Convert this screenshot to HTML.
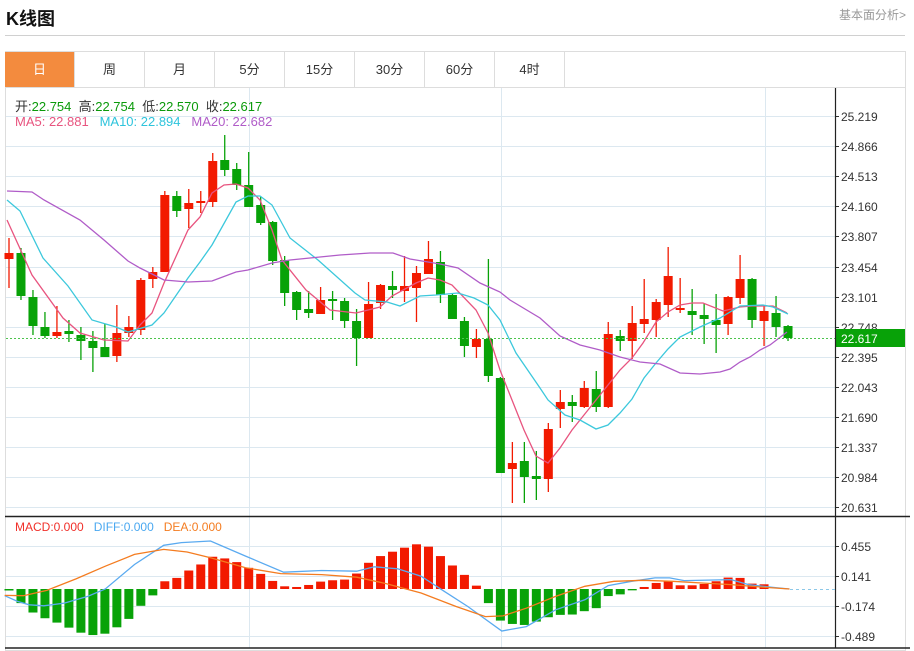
<!DOCTYPE html>
<html><head><meta charset="utf-8"><style>
body{margin:0;width:914px;height:651px;background:#fff;font-family:"Liberation Sans","Noto Sans CJK SC",sans-serif;position:relative;overflow:hidden}
.t{position:absolute;white-space:nowrap}
</style></head><body>
<div class="t" style="left:6px;top:5px;font-size:18px;font-weight:bold;color:#111">K线图</div>
<div class="t" style="right:8px;top:6px;font-size:12px;color:#999">基本面分析&gt;</div>
<div style="position:absolute;left:5px;top:35px;width:900px;height:1px;background:#d0d0d0"></div>
<div style="position:absolute;left:5px;top:51px;width:899px;height:598px;border:1px solid #ddd"></div>
<div style="position:absolute;left:6px;top:87px;width:899px;height:1px;background:#ddd"></div>
<div id="tabs"></div>
<svg id="c" width="914" height="651" style="position:absolute;left:0;top:0"></svg>
<div class="t" style="left:15px;top:96px;font-size:13px;color:#333">开:<span style="color:#0a9a0a">22.754</span>&nbsp; 高:<span style="color:#0a9a0a">22.754</span>&nbsp; 低:<span style="color:#0a9a0a">22.570</span>&nbsp; 收:<span style="color:#0a9a0a">22.617</span></div>
<div class="t" style="left:15px;top:114px;font-size:13px"><span style="color:#e8547f">MA5: 22.881</span>&nbsp;&nbsp; <span style="color:#2ec4dc">MA10: 22.894</span>&nbsp;&nbsp; <span style="color:#b05cc8">MA20: 22.682</span></div>
<div class="t" style="left:15px;top:520px;font-size:12px"><span style="color:#f0302a">MACD:0.000</span>&nbsp;&nbsp; <span style="color:#4aa8f0">DIFF:0.000</span>&nbsp;&nbsp; <span style="color:#f47c20">DEA:0.000</span></div>
<script>
var tabs=["日","周","月","5分","15分","30分","60分","4时"],h="";
tabs.forEach(function(t,i){h+='<div class="t" style="left:'+(5+70*i)+'px;top:52px;width:69px;height:35px;line-height:35px;text-align:center;font-size:13px;border-right:1px solid #ddd;'+(i==0?'background:#f38b3e;color:#fff;':'color:#333;')+'">'+t+'</div>';});
document.getElementById('tabs').innerHTML=h;
var s="";
function L(x1,y1,x2,y2,c,w,d){s+='<line x1="'+x1+'" y1="'+y1+'" x2="'+x2+'" y2="'+y2+'" stroke="'+c+'" stroke-width="'+(w||1)+'"'+(d?' stroke-dasharray="'+d+'"':'')+'/>';}
function T(x,y,t,c,fs){s+='<text x="'+x+'" y="'+y+'" fill="'+(c||'#333')+'" font-size="'+(fs||12)+'" font-family="Liberation Sans,sans-serif">'+t+'</text>';}
var vals=["25.219","24.866","24.513","24.160","23.807","23.454","23.101","22.748","22.395","22.043","21.690","21.337","20.984","20.631"];
vals.forEach(function(v,i){var y=116+30.1*i;y=Math.round(y)+.5;L(6,y,835,y,"#dce8f0");L(835,y,839,y,"#333");T(841,y+4.5,v);});
[249.5,501.5,765.5].forEach(function(x){L(x,88,x,648,"#dce8f0");});
[[546,"0.455"],[576,"0.141"],[606,"-0.174"],[636,"-0.489"]].forEach(function(a){var y=a[0]+.5;L(6,y,835,y,"#dce8f0");L(835,y,839,y,"#333");T(841,y+4.5,a[1]);});
var C=[[1,253,259,238,288],[0,253,296,248,300],[0,297,326,290,335],[0,327,336,312,338],[1,336,332,306,338],[0,331,334,320,342],[0,335,341,327,360],[0,341,348,331,372],[0,347,357,324,357],[1,356,333,305,362],[1,333,327,316,337],[1,330,280,278,335],[1,279,272,267,288],[1,272,195,191,272],[0,196,211,191,217],[1,209,203,189,228],[1,203,201,191,213],[1,202,161,153,207],[0,160,170,135,176],[0,169,185,163,190],[0,185,207,152,207],[0,205,223,197,225],[0,222,261,221,265],[0,260,293,256,306],[0,292,310,291,320],[0,309,313,291,318],[1,314,300,287,314],[0,299,301,291,320],[0,301,321,298,328],[0,321,338,309,366],[1,338,304,282,338],[1,303,285,284,309],[0,286,290,271,298],[1,291,286,256,302],[1,288,273,266,322],[1,274,259,241,274],[0,262,295,251,303],[0,295,319,294,319],[0,321,346,317,357],[1,347,339,329,358],[0,339,376,259,382],[0,378,473,377,473],[1,469,463,442,503],[0,461,477,442,503],[0,476,479,451,500],[1,479,429,423,492],[1,409,402,390,428],[0,402,406,395,422],[1,407,388,381,408],[0,389,407,371,412],[1,407,334,322,408],[0,336,341,330,351],[1,341,323,306,359],[1,324,319,279,333],[1,320,302,299,337],[1,305,276,247,317],[1,310,308,278,313],[0,311,315,289,335],[0,315,319,304,344],[0,320,325,294,353],[1,324,297,296,335],[1,298,279,255,304],[0,279,320,278,328],[1,321,311,305,346],[0,313,327,296,337],[0,326,338,325,341]];
C.forEach(function(c,i){var x=9+11.985*i,col=c[0]?"#f21a00":"#08a208",t=Math.min(c[1],c[2]),b=Math.max(c[1],c[2]);if(b-t<2)b=t+2;
L(x,c[3],x,c[4],col,1.3);s+='<rect x="'+(x-4.5)+'" y="'+t+'" width="9" height="'+(b-t)+'" fill="'+col+'"/>';});
function P(pts,c){s+='<polyline fill="none" stroke="'+c+'" stroke-width="1.3" points="'+pts+'"/>';}
P("7,220 32,275 63,318 80,333 104,340 128,341 140,325 152,313 164,283 188,230 200,217 212,193 224,185 236,184 248,188 260,200 272,230 282,260 306,290 330,310 356,313 380,307 392,296 416,283 428,278 440,280 452,285 476,310 488,333 500,370 524,430 536,456 548,463 560,448 572,430 584,415 596,400 608,385 620,370 632,358 643,343 656,322 668,312 680,305 692,303 703,303 723,311 740,307 752,306 773,306 787,313","#e8547f");
P("7,200 20,211 43,258 68,286 92,320 116,327 128,332 152,325 164,313 188,278 200,262 212,245 236,202 248,196 260,196 272,205 290,238 318,260 355,293 365,300 387,302 400,306 420,296 436,295 458,293 474,298 488,305 500,320 516,353 540,388 548,400 565,415 580,420 596,429 608,425 620,413 632,399 644,378 656,363 668,349 680,337 700,327 720,318 740,306 763,305 773,307 788,314","#3cc8dc");
P("7,191 32,192 44,200 80,220 104,240 128,261 140,268 164,280 188,282 212,281 236,272 248,270 272,263 290,260 320,257 340,255 370,253 393,253 410,259 440,264 458,268 480,283 500,292 510,300 540,318 560,336 580,345 600,350 620,357 640,362 660,364 680,373 700,374 720,372 730,369 740,362 750,357 760,350 770,345 787,332","#b05cc8");
L(6,338.5,835,338.5,"#4cc44c",1,"2,2");
s+='<rect x="835" y="329" width="70" height="18" fill="#08a208"/>';T(841,343,"22.617","#fff",12);
L(5,516.5,910,516.5,"#222",1.5);L(5,648,910,648,"#222",1.5);L(835.5,88,835.5,648,"#222",1.2);
var M=[272,310,338,355,368,383,398,405,401,382,357,318,287,245,235,213,195,172,177,188,205,223,244,260,262,256,246,242,240,222,190,170,157,145,135,142,170,198,226,258,310,362,372,375,365,352,345,344,334,325,289,284,272,262,250,245,257,257,253,245,234,235,252,254];
M.forEach(function(Y,i){var x=9+11.985*i,v=(Y-268)*0.336;if(i==0)v=1.5;var col=v>0?"#08a208":"#f21a00";
if(v>0)s+='<rect x="'+(x-4.5)+'" y="589" width="9" height="'+v+'" fill="'+col+'"/>';else s+='<rect x="'+(x-4.5)+'" y="'+(589+v)+'" width="9" height="'+(-v)+'" fill="'+col+'"/>';});
function Q(a,c){var p=a.map(function(q){return (q[0]/1.71).toFixed(1)+","+(546+(q[1]-140)*0.336).toFixed(1);}).join(" ");P(p,c);}
Q([[8,288],[30,305],[50,315],[75,318],[110,310],[150,290],[180,268],[230,195],[280,138],[310,130],[360,125],[420,170],[485,218],[550,213],[610,215],[640,202],[680,208],[720,230],[760,275],[800,320],[858,393],[900,380],[950,330],[1000,300],[1040,258],[1080,245],[1120,235],[1145,235],[1170,243],[1250,240],[1280,255],[1320,263],[1350,268]],"#5aaaf0");
Q([[8,287],[40,288],[80,272],[130,238],[180,200],[230,165],[280,150],[320,158],[360,175],[420,205],[480,222],[550,225],[610,233],[660,252],[720,280],[780,320],[830,350],[860,348],[900,325],[950,290],[1000,260],[1050,245],[1100,242],[1150,245],[1200,250],[1250,255],[1300,262],[1350,268]],"#f47c20");
L(790,589.5,835,589.5,"#8cc8e8",1,"3,3");
document.getElementById('c').innerHTML=s;
</script>
</body></html>
